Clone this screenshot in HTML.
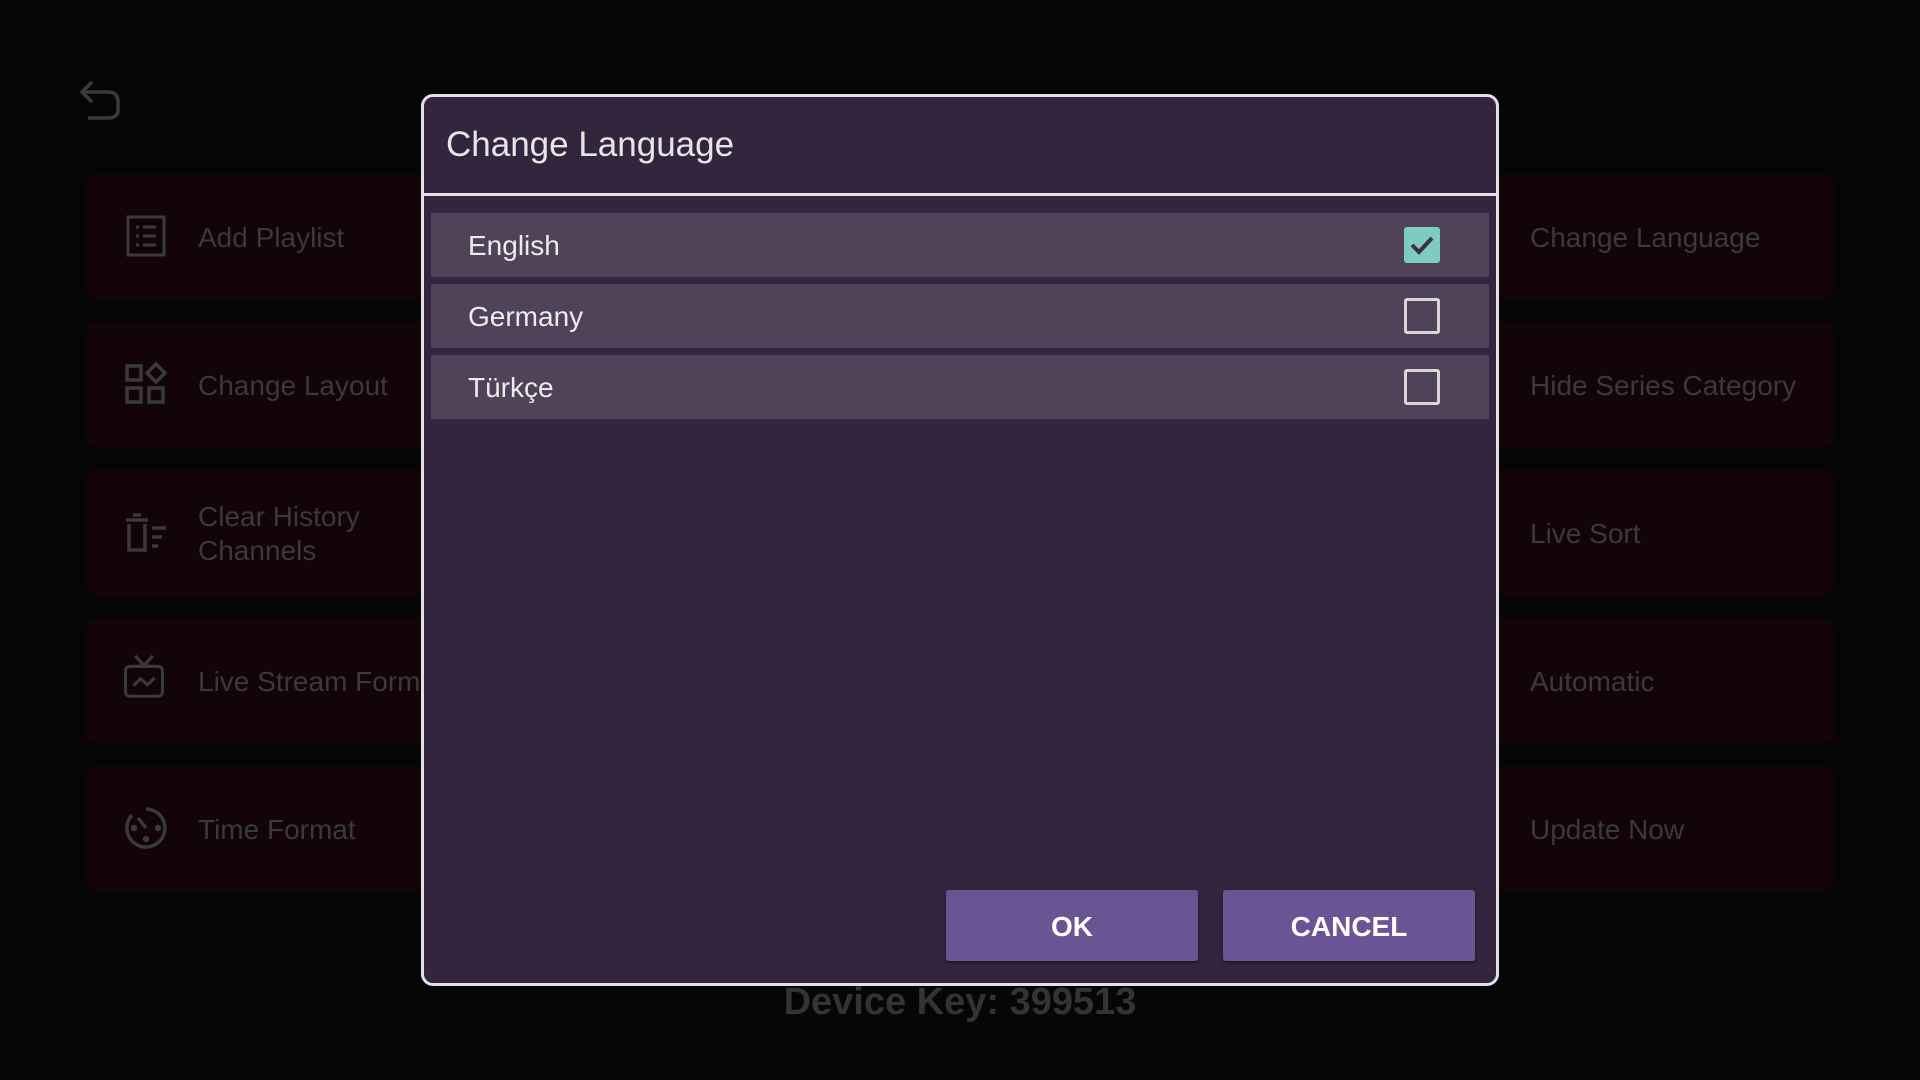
<!DOCTYPE html>
<html><head><meta charset="utf-8"><style>
*{margin:0;padding:0;box-sizing:border-box}
body{width:1920px;height:1080px;background:#060508;font-family:"Liberation Sans",Roboto,sans-serif;position:relative;overflow:hidden}
.card{position:absolute;height:125px;background:#120407;border-radius:10px}
.ct{position:absolute;color:#3a3a3a;font-size:28px;line-height:34px}
.ic{position:absolute;width:44px;height:44px}
.dlg{position:absolute;left:421px;top:94px;width:1078px;height:892px;background:#33253d;border:3px solid #e2e0e4;border-radius:12px}
.title{position:absolute;left:22px;top:28px;color:#e6e6e6;font-size:35px}
.div{position:absolute;left:0;right:0;top:96px;height:3px;background:#e2e0e4}
.row{position:absolute;left:7px;width:1058px;height:64px;background:#504259}
.row span{position:absolute;left:37px;top:17px;color:#ececec;font-size:28px}
.cb{position:absolute;left:973px;top:14px;width:36px;height:36px;border:3px solid #d8d8d8;border-radius:3px}
.cb.on{background:#7ecbc0;border:none}
.btn{position:absolute;top:793px;width:252px;height:71px;background:#6b5494;border-radius:3px;color:#fff;font-weight:bold;font-size:28px;text-align:center;line-height:73px;box-shadow:0 2px 3px rgba(0,0,0,.4)}
</style></head><body>
<svg style="position:absolute;left:78px;top:78px" width="44" height="44" viewBox="0 0 44 44" fill="none" stroke="#3a3a3a" stroke-width="3.5"><path d="M14 4 L4 14 L14 24 M4 14 H30 Q40 14 40 24 V32 Q40 40 30 40 H10"/></svg>
<div class="card" style="left:86px;top:174px;width:400px"></div>
<div class="card" style="left:86px;top:322px;width:400px"></div>
<div class="card" style="left:86px;top:470px;width:400px"></div>
<div class="card" style="left:86px;top:618px;width:400px"></div>
<div class="card" style="left:86px;top:766px;width:400px"></div>
<div class="card" style="left:1440px;top:174px;width:394px"></div>
<div class="card" style="left:1440px;top:322px;width:394px"></div>
<div class="card" style="left:1440px;top:470px;width:394px"></div>
<div class="card" style="left:1440px;top:618px;width:394px"></div>
<div class="card" style="left:1440px;top:766px;width:394px"></div>
<svg class="ic" style="left:124px;top:214px" viewBox="0 0 44 44" fill="none" stroke="#3a3a3a" stroke-width="3"><rect x="4" y="3" width="36" height="38"/><path d="M12 13h3M19 13h13M12 22h3M19 22h13M12 31h3M19 31h13"/></svg>
<svg class="ic" style="left:124px;top:362px" viewBox="0 0 44 44" fill="none" stroke="#3a3a3a" stroke-width="3.5"><rect x="3" y="4" width="14" height="14"/><path d="M32 2 L41 11 L32 20 L23 11Z"/><rect x="3" y="26" width="14" height="14"/><rect x="25" y="26" width="14" height="14"/></svg>
<svg class="ic" style="left:124px;top:510px" viewBox="0 0 44 44" fill="none" stroke="#3a3a3a" stroke-width="3.5"><path d="M2 10h22M9 5h8M5 14v26h16V14M28 18h14M28 27h10M28 36h6"/></svg>
<svg class="ic" style="left:122px;top:654px" viewBox="0 0 48 50" fill="none" stroke="#3a3a3a" stroke-width="3.5"><path d="M14 2 L24 13 L34 2"/><rect x="3" y="14" width="42" height="34" rx="5"/><path d="M12 36 L20 28 L28 35 L36 27"/></svg>
<svg class="ic" style="left:124px;top:806px" viewBox="0 0 44 44" fill="none" stroke="#3a3a3a" stroke-width="3.5"><path d="M22 3 A19 19 0 1 1 8 9"/><path d="M14 12 L22 22"/><circle cx="10" cy="22" r="1.5" fill="#3a3a3a"/><circle cx="34" cy="22" r="1.5" fill="#3a3a3a"/><circle cx="22" cy="33" r="1.5" fill="#3a3a3a"/></svg>
<div class="ct" style="left:198px;top:221px">Add Playlist</div>
<div class="ct" style="left:198px;top:369px">Change Layout</div>
<div class="ct" style="left:198px;top:500px">Clear History<br>Channels</div>
<div class="ct" style="left:198px;top:665px">Live Stream Format</div>
<div class="ct" style="left:198px;top:813px">Time Format</div>
<div class="ct" style="left:1530px;top:221px">Change Language</div>
<div class="ct" style="left:1530px;top:369px">Hide Series Category</div>
<div class="ct" style="left:1530px;top:517px">Live Sort</div>
<div class="ct" style="left:1530px;top:665px">Automatic</div>
<div class="ct" style="left:1530px;top:813px">Update Now</div>
<div style="position:absolute;left:0;width:1920px;top:981px;text-align:center;color:#333;font-weight:bold;font-size:38px">Device Key: 399513</div>
<div class="dlg">
<div class="title">Change Language</div>
<div class="div"></div>
<div class="row" style="top:116px"><span>English</span><div class="cb on"><svg width="36" height="36" viewBox="0 0 36 36" fill="none" stroke="#3d3049" stroke-width="4"><path d="M8 18 L15 25 L28 11"/></svg></div></div>
<div class="row" style="top:187px"><span>Germany</span><div class="cb"></div></div>
<div class="row" style="top:258px"><span>Türkçe</span><div class="cb"></div></div>
<div class="btn" style="left:522px">OK</div>
<div class="btn" style="left:799px">CANCEL</div>
</div>
</body></html>
